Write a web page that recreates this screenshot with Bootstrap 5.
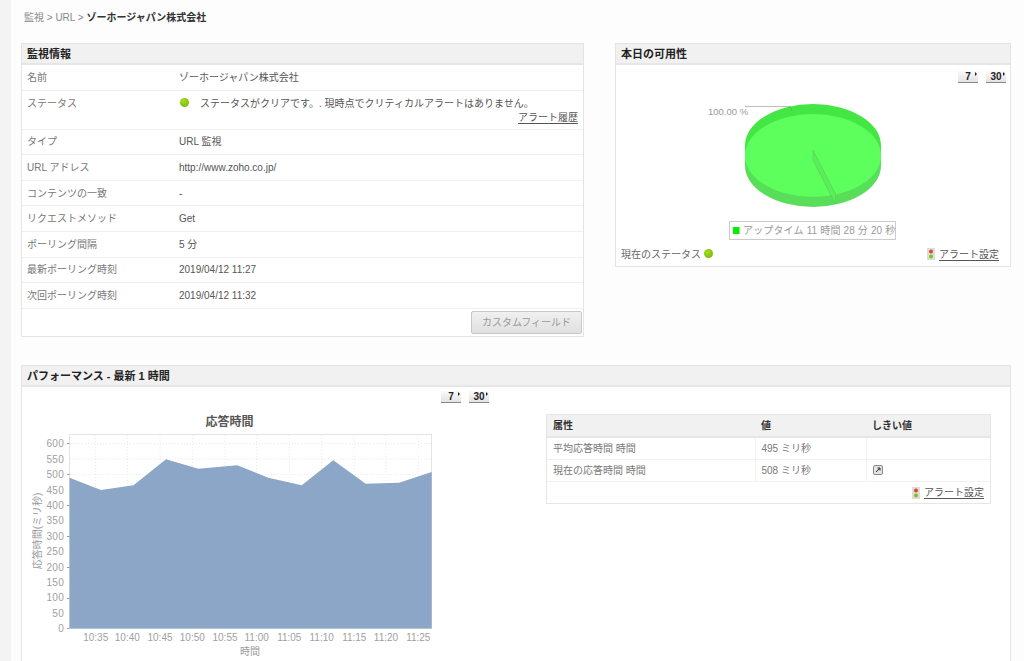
<!DOCTYPE html>
<html lang="ja">
<head>
<meta charset="utf-8">
<title>ゾーホージャパン株式会社</title>
<link href="https://cdn.jsdelivr.net/npm/bootstrap@5.3.0/dist/css/bootstrap.min.css" rel="stylesheet">
<style>
html,body{height:661px;overflow:hidden}
body{background:#fdfdfd;font-family:"Liberation Sans","Noto Sans CJK JP",sans-serif;font-size:10px;color:#666}
.rail{width:11px;flex:none;background:#f3f3f3}
.page-main{width:1013px;padding:0 0 0 10px}
.crumbs{height:43px;padding:12px 0 0 3px;line-height:12px;color:#888}
.crumbs b{color:#333;font-weight:700}
.panel{border-radius:0;border:1px solid #e4e4e4;background:#fff}
.panel>.card-header{height:21px;padding:0 5px;line-height:20px;font-size:11px;font-weight:700;color:#222;background:#f1f1f1;border-bottom:2px solid #e6e6e6;border-radius:0}
.info-panel{width:563px;height:294px;margin:0}
.avail-panel{width:396px;height:224px;margin-left:31px}
.perf-panel{width:990px;margin-top:28px;height:340px}
.info-table{margin:0;table-layout:fixed;font-size:10px;--bs-table-bg:transparent;--bs-table-color:#666;--bs-table-border-color:#f0f0f0}
.info-table th{width:157px;font-weight:400;color:#777;padding:0 0 0 5px;height:25.6px;vertical-align:middle}
.info-table td{padding:0;height:25.6px;vertical-align:middle;color:#555}
.tall th,.tall td{height:38.5px;vertical-align:top;padding-top:5px}
.status-dot{margin:0 7px 0 1px}
.hist-row{margin-top:-1px;padding-right:5px}
.info-foot{padding:2px 1px 0 0;text-align:right}
.cf-btn{--bs-btn-padding-x:0;--bs-btn-padding-y:0;--bs-btn-font-size:10px;--bs-btn-border-radius:2px;width:111px;height:23px;line-height:21px;color:#999;background:linear-gradient(#f0f0f0,#e0e0e0);border:1px solid #c8c8c8}
.alert-link-x{color:#555;text-decoration:underline;text-underline-offset:2px}
.dot{display:inline-block;width:9px;height:9px;border-radius:50%;background:radial-gradient(circle at 40% 35%,#a8dc22,#6fb000)}
.range-btn{position:relative;width:20px;height:12px;padding:0;font-size:10px;font-weight:700;line-height:11px;color:#222;background:linear-gradient(#fafafa,#e2e2e2);border:0;border-bottom:1px solid #888;border-radius:0}
.range-btn::after{content:"";position:absolute;right:1px;top:1px;border-left:2px solid #222;border-top:2px solid transparent;border-bottom:2px solid transparent}
.avail-body{padding:0}
.range-row{height:18px;padding:6px 4px 0 0;gap:8px}
.pie-svg{display:block;margin-top:-1px}
.avail-foot{padding:0 11px 0 5px;height:20px;margin-top:2px}
.avail-foot .dot{margin-left:3px}
.perf-range{height:26px;padding:4px 0 0 419px;gap:8px}
.perf-chart{width:524px;flex:none}
.attr-wrap{width:445px;border:1px solid #e6e6e6;margin-top:1px;height:90px;background:#fff}
.attr-table{margin:0;font-size:10px;table-layout:fixed;--bs-table-bg:transparent;--bs-table-border-color:#f0f0f0;--bs-table-color:#777}
.attr-table th{height:22px;padding:0 0 0 6px;vertical-align:middle;font-weight:700;color:#333;background:#f1f1f1;border-bottom:2px solid #e6e6e6}
.attr-table td{height:22px;padding:0 0 0 6px;vertical-align:middle;border-right:1px solid #f2f2f2}
.attr-table td:last-child{border-right:0}
.attr-foot{height:22px;padding:0 6px;line-height:22px}
svg text{font-family:"Liberation Sans","Noto Sans CJK JP",sans-serif}
</style>
</head>
<body class="d-flex">
<div class="rail"></div>
<main class="page-main">
  <div class="crumbs">監視 &gt; URL &gt; <b>ゾーホージャパン株式会社</b></div>

  <div class="d-flex align-items-start">
    <section class="card panel info-panel">
      <div class="card-header">監視情報</div>
      <table class="table info-table">
        <tbody>
          <tr><th>名前</th><td>ゾーホージャパン株式会社</td></tr>
          <tr class="tall"><th>ステータス</th><td><span class="dot status-dot"></span><span class="ms-1">ステータスがクリアです。. 現時点でクリティカルアラートはありません。</span><div class="text-end hist-row"><a href="#" class="alert-link-x">アラート履歴</a></div></td></tr>
          <tr><th>タイプ</th><td>URL 監視</td></tr>
          <tr><th>URL アドレス</th><td>http://www.zoho.co.jp/</td></tr>
          <tr><th>コンテンツの一致</th><td>-</td></tr>
          <tr><th>リクエストメソッド</th><td>Get</td></tr>
          <tr><th>ポーリング間隔</th><td>5 分</td></tr>
          <tr><th>最新ポーリング時刻</th><td>2019/04/12 11:27</td></tr>
          <tr><th>次回ポーリング時刻</th><td>2019/04/12 11:32</td></tr>
        </tbody>
      </table>
      <div class="info-foot"><button type="button" class="btn cf-btn">カスタムフィールド</button></div>
    </section>

    <section class="card panel avail-panel">
      <div class="card-header">本日の可用性</div>
      <div class="card-body avail-body">
        <div class="d-flex justify-content-end range-row">
          <button type="button" class="btn range-btn">7</button>
          <button type="button" class="btn range-btn">30</button>
        </div>
        <svg class="pie-svg" width="394" height="160" viewBox="616 82 394 160">
          <line x1="745" y1="106.5" x2="790" y2="106.5" stroke="#bbb"/>
          <text x="708" y="115" font-size="9.5" fill="#999">100.00 %</text>
          <ellipse cx="813" cy="165.5" rx="68" ry="41.5" fill="#58de58"/>
          <rect x="745" y="145.5" width="136" height="20" fill="#58de58"/>
          <ellipse cx="813" cy="145.5" rx="68" ry="41.5" fill="#44e644"/>
          <ellipse cx="813" cy="155.5" rx="68" ry="41.5" fill="#5cff5c"/>
          <line x1="790" y1="106" x2="792" y2="111" stroke="#3cc83c"/>
          <polygon points="813,150 835.5,194 835.5,204 813,160" fill="#5cec5c" stroke="#50c850" stroke-width=".5"/>
          <rect x="729.5" y="221.5" width="166" height="18" fill="#fff" stroke="#ccc"/>
          <rect x="733" y="227" width="6.5" height="7" fill="#00f000"/>
          <text x="743" y="234" font-size="10" fill="#999" letter-spacing=".15">アップタイム 11 時間 28 分 20 秒</text>
        </svg>
        <div class="d-flex justify-content-between align-items-center avail-foot">
          <span>現在のステータス<span class="dot"></span></span>
          <span class="d-flex align-items-center gap-1">
            <svg width="8" height="12" viewBox="0 0 8 12"><rect width="8" height="12" fill="#ddd"/><circle cx="4" cy="3.5" r="2" fill="#e24a1c"/><circle cx="4" cy="8.5" r="2" fill="#7cc520"/></svg>
            <a href="#" class="alert-link-x">アラート設定</a>
          </span>
        </div>
      </div>
    </section>
  </div>

  <section class="card panel perf-panel">
    <div class="card-header">パフォーマンス - 最新 1 時間</div>
    <div class="d-flex perf-range">
      <button type="button" class="btn range-btn">7</button>
      <button type="button" class="btn range-btn">30</button>
    </div>
    <div class="d-flex align-items-start">
      <div class="perf-chart">
        <svg width="524" height="260" viewBox="22 412 524 260" class="d-block">
          <text x="229.5" y="425" text-anchor="middle" font-size="12" font-weight="700" fill="#555">応答時間</text>
          <rect x="69.5" y="433.5" width="362" height="194" fill="#fff" stroke="#e4e4e4"/>
          <g stroke="#e8e8e8" stroke-dasharray="1 2">
            <line x1="70" x2="431" y1="442.5" y2="442.5"/><line x1="70" x2="431" y1="458" y2="458"/><line x1="70" x2="431" y1="473.5" y2="473.5"/>
            <line x1="95.7" x2="95.7" y1="434" y2="627"/><line x1="127.3" x2="127.3" y1="434" y2="627"/><line x1="160" x2="160" y1="434" y2="627"/><line x1="192.3" x2="192.3" y1="434" y2="627"/><line x1="225" x2="225" y1="434" y2="627"/><line x1="256.7" x2="256.7" y1="434" y2="627"/><line x1="289.3" x2="289.3" y1="434" y2="627"/><line x1="321.7" x2="321.7" y1="434" y2="627"/><line x1="354.3" x2="354.3" y1="434" y2="627"/><line x1="386" x2="386" y1="434" y2="627"/><line x1="418.3" x2="418.3" y1="434" y2="627"/>
          </g>
          <polygon fill="#8ba6c6" points="69.5,627.5 69.5,476.7 101,489 133.5,484.3 166,458.3 198.3,467.7 237.3,464.3 268.3,476.7 301.7,484.3 333.3,459.3 365.7,482.7 399,481.7 431.7,471 431.7,627.5"/>
          <g font-size="10" fill="#a0a0a0" text-anchor="end" letter-spacing=".3">
            <text x="64" y="446">600</text><text x="64" y="461.5">550</text><text x="64" y="477">500</text><text x="64" y="492.5">450</text><text x="64" y="508">400</text><text x="64" y="523">350</text><text x="64" y="538.5">300</text><text x="64" y="554">250</text><text x="64" y="569.5">200</text><text x="64" y="585">150</text><text x="64" y="600">100</text><text x="64" y="615.5">50</text><text x="64" y="631">0</text>
          </g>
          <g stroke="#999">
            <line x1="67" x2="69.5" y1="442.5" y2="442.5"/><line x1="67" x2="69.5" y1="473.5" y2="473.5"/><line x1="67" x2="69.5" y1="504.5" y2="504.5"/><line x1="67" x2="69.5" y1="535.5" y2="535.5"/><line x1="67" x2="69.5" y1="566.5" y2="566.5"/><line x1="67" x2="69.5" y1="597.5" y2="597.5"/><line x1="67" x2="69.5" y1="627.5" y2="627.5"/>
          </g>
          <g font-size="10" fill="#a0a0a0" text-anchor="middle">
            <text x="95.7" y="640">10:35</text><text x="127.3" y="640">10:40</text><text x="160" y="640">10:45</text><text x="192.3" y="640">10:50</text><text x="225" y="640">10:55</text><text x="256.7" y="640">11:00</text><text x="289.3" y="640">11:05</text><text x="321.7" y="640">11:10</text><text x="354.3" y="640">11:15</text><text x="386" y="640">11:20</text><text x="418.3" y="640">11:25</text>
          </g>
          <text x="250" y="654" text-anchor="middle" font-size="10" fill="#999">時間</text>
          <text transform="translate(41 530) rotate(-90)" text-anchor="middle" font-size="10" fill="#999">応答時間(ミリ秒)</text>
        </svg>
      </div>
      <div class="attr-wrap">
        <table class="table attr-table">
          <colgroup><col style="width:208px"><col style="width:111px"><col></colgroup>
          <thead><tr><th>属性</th><th>値</th><th>しきい値</th></tr></thead>
          <tbody>
            <tr><td>平均応答時間 時間</td><td>495 ミリ秒</td><td></td></tr>
            <tr><td>現在の応答時間 時間</td><td>508 ミリ秒</td><td><svg width="10" height="10" viewBox="0 0 10 10" class="d-block"><rect x=".5" y=".5" width="9" height="9" rx="1.5" fill="#e4e4e4" stroke="#888"/><path d="M3 7 6.5 3.5M4.5 3H7V5.5" fill="none" stroke="#222"/></svg></td></tr>
          </tbody>
        </table>
        <div class="attr-foot d-flex justify-content-end align-items-center gap-1">
          <svg width="8" height="12" viewBox="0 0 8 12"><rect width="8" height="12" fill="#ddd"/><circle cx="4" cy="3.5" r="2" fill="#e24a1c"/><circle cx="4" cy="8.5" r="2" fill="#7cc520"/></svg>
          <a href="#" class="alert-link-x">アラート設定</a>
        </div>
      </div>
    </div>
  </section>
</main>
<script src="https://cdn.jsdelivr.net/npm/bootstrap@5.3.0/dist/js/bootstrap.bundle.min.js"></script>
</body>
</html>
